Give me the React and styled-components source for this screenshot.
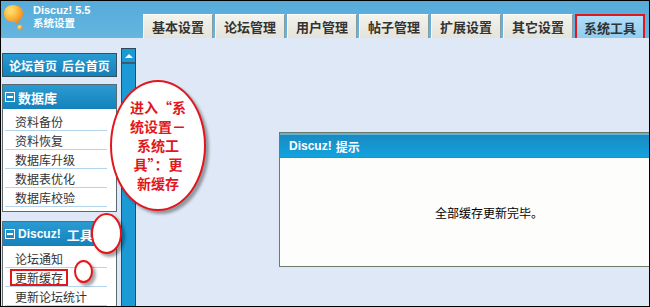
import styled, { createGlobalStyle } from 'styled-components'

const GlobalStyle = createGlobalStyle`
  html, body {
    margin: 0;
    padding: 0;
    overflow: hidden;
    background: #ffffff;
  }
  * {
    box-sizing: border-box;
  }
`

const cjk = `"Noto Sans CJK SC", "Liberation Sans", sans-serif`

const Frame = styled.div`
  position: relative;
  width: 650px;
  height: 307px;
  border: 1px solid #000;
  display: flex;
  flex-direction: column;
  overflow: hidden;
  font-family: ${cjk};
  background: #dfe8f6;
`

const Header = styled.div`
  height: 37px;
  flex-shrink: 0;
  display: flex;
  background: linear-gradient(#56abd9, #65b6e0);
`

const Brand = styled.div`
  width: 142px;
  display: flex;
  align-items: flex-start;
  padding: 2px 0 0 2px;
  gap: 8px;
`

const BrandText = styled.div`
  display: flex;
  flex-direction: column;
  color: #fff;
  font-weight: bold;
  line-height: 11px;
  padding-top: 2px;
  b {
    font-family: "Liberation Sans", sans-serif;
    font-size: 11px;
  }
  span {
    font-size: 10.5px;
    margin-top: 1px;
  }
`

const Tabs = styled.div`
  align-self: flex-end;
  display: flex;
  gap: 2px;
`

const Tab = styled.div`
  width: 70px;
  height: 24px;
  display: flex;
  align-items: center;
  justify-content: center;
  font-size: 13px;
  font-weight: bold;
  color: #333;
  background: ${({ $active }) =>
    $active ? 'linear-gradient(#b3defa, #8fcdef)' : 'linear-gradient(#f3f3ed, #e3e3db)'};
  border: ${({ $active }) => ($active ? '2px solid #e3161c' : '1px solid #ffffff')};
  border-right-color: ${({ $active }) => ($active ? '#e3161c' : '#8a9aa2')};
  border-bottom: none;
`

const Body = styled.div`
  flex: 1;
  display: flex;
  min-height: 0;
`

const Sidebar = styled.div`
  width: 115px;
  margin-left: 1px;
  padding-top: 15px;
  display: flex;
  flex-direction: column;
  flex-shrink: 0;
`

const NavBox = styled.div`
  height: 25px;
  border: 1px solid #34515e;
  background: linear-gradient(#2a9bd2, #1581ba);
  color: #fff;
  font-size: 12px;
  font-weight: bold;
  white-space: nowrap;
  display: flex;
  align-items: center;
  padding-left: 6px;
  word-spacing: 2px;
`

const Section = styled.div`
  margin-top: ${({ $gap }) => $gap}px;
  border: 1px solid #5b6b73;
  border-bottom-width: ${({ $open }) => ($open ? 0 : 1)}px;
  background: #fff;
  padding-bottom: ${({ $open }) => ($open ? 0 : 4)}px;
`

const SectionHead = styled.div`
  height: 24px;
  display: flex;
  align-items: center;
  gap: 3px;
  padding-left: 2px;
  background: linear-gradient(#2a9bd2, #1581ba);
  color: #fff;
  font-size: 13px;
  font-weight: bold;
  white-space: nowrap;
`

const Toggle = styled.span`
  width: 10px;
  height: 10px;
  border: 1px solid #fff;
  position: relative;
  &::after {
    content: '';
    position: absolute;
    left: 1px;
    right: 1px;
    top: 3px;
    height: 2px;
    background: #fff;
  }
`

const HeadLatin = styled.span`
  font-family: "Liberation Sans", sans-serif;
  font-size: 12px;
  margin-right: 3px;
`

const ItemList = styled.div`
  padding-top: 3px;
`

const Item = styled.div`
  height: 19px;
  margin: 0 9px 0 2px;
  padding-left: 10px;
  border-bottom: 1px solid #b4d4ec;
  display: flex;
  align-items: center;
  font-size: 12px;
  color: #333;
  white-space: nowrap;
`

const Mark = styled.span`
  display: inline-block;
  border: 2px solid #e3161c;
  padding: 0 3px;
  margin-left: -5px;
  line-height: 13px;
`

const ScrollTrack = styled.div`
  width: 15px;
  margin: 10px 0 0 4px;
  flex-shrink: 0;
  background: #1b9ad6;
  border: 1px solid #2d4a5a;
  border-bottom: none;
`

const ScrollUp = styled.div`
  height: 15px;
  border-bottom: 2px solid #3d5b6c;
  display: flex;
  align-items: center;
  justify-content: center;
  &::before {
    content: '';
    border-left: 4px solid transparent;
    border-right: 4px solid transparent;
    border-bottom: 4px solid #fff;
  }
`

const Main = styled.div`
  flex: 1;
  overflow: hidden;
  padding: 94px 0 0 143px;
`

const Dialog = styled.div`
  width: 420px;
  border: 1px solid #6d7b6b;
  background: #fdfdfb;
`

const DialogHead = styled.div`
  height: 25px;
  border-top: 2px solid #5fb2d8;
  border-bottom: 1px solid #6d7b6b;
  background: linear-gradient(#1a8ac2, #12a3df);
  color: #fff;
  font-size: 12px;
  font-weight: bold;
  display: flex;
  align-items: center;
  padding-left: 9px;
  gap: 4px;
  b {
    font-family: "Liberation Sans", sans-serif;
  }
`

const DialogBody = styled.div`
  height: 108px;
  display: flex;
  align-items: center;
  justify-content: center;
  font-size: 12px;
  color: #000;
`

const Callout = styled.div`
  position: absolute;
  left: ${({ $x }) => $x}px;
  top: ${({ $y }) => $y}px;
  width: ${({ $w }) => $w}px;
  height: ${({ $h }) => $h}px;
  border-radius: 50%;
  border: 2px solid #e3161c;
  background: #fff;
  box-shadow: 3px 3px 3px rgba(0, 0, 0, 0.35);
  display: flex;
  align-items: center;
  justify-content: center;
  text-align: center;
  color: #e3161c;
  font-size: 14px;
  font-weight: bold;
  line-height: 19px;
`

function Logo() {
  return (
    <svg width="22" height="28" viewBox="0 0 22 28">
      <defs>
        <radialGradient id="bub" cx="0.35" cy="0.3" r="0.8">
          <stop offset="0" stopColor="#ffe680" />
          <stop offset="0.5" stopColor="#fbb63a" />
          <stop offset="1" stopColor="#ee7f16" />
        </radialGradient>
      </defs>
      <path
        d="M10 2 C16 2 20 5.5 20 10.5 C20 14.5 17.5 17 15 18 C15.5 19.5 16.5 20.5 17.5 21 C14.5 21 12.5 20 11.5 19 C5.5 19.5 1 16 1 10.5 C1 5.5 4.5 2 10 2 Z"
        fill="url(#bub)"
      />
      <circle cx="17" cy="24.5" r="2.6" fill="url(#bub)" />
    </svg>
  )
}

const tabs = ['基本设置', '论坛管理', '用户管理', '帖子管理', '扩展设置', '其它设置', '系统工具']
const dbItems = ['资料备份', '资料恢复', '数据库升级', '数据表优化', '数据库校验']

export default function App() {
  return (
    <>
      <GlobalStyle />
      <Frame>
        <Header>
          <Brand>
            <Logo />
            <BrandText>
              <b>Discuz! 5.5</b>
              <span>系统设置</span>
            </BrandText>
          </Brand>
          <Tabs>
            {tabs.map((t) => (
              <Tab key={t} $active={t === '系统工具'}>
                {t}
              </Tab>
            ))}
          </Tabs>
        </Header>
        <Body>
          <Sidebar>
            <NavBox>论坛首页 后台首页</NavBox>
            <Section $gap={7}>
              <SectionHead>
                <Toggle />
                数据库
              </SectionHead>
              <ItemList>
                {dbItems.map((t) => (
                  <Item key={t}>{t}</Item>
                ))}
              </ItemList>
            </Section>
            <Section $gap={9} $open>
              <SectionHead>
                <Toggle />
                <HeadLatin>Discuz!</HeadLatin>工具
              </SectionHead>
              <ItemList>
                <Item>论坛通知</Item>
                <Item>
                  <Mark>更新缓存</Mark>
                </Item>
                <Item>更新论坛统计</Item>
              </ItemList>
            </Section>
          </Sidebar>
          <ScrollTrack>
            <ScrollUp />
          </ScrollTrack>
          <Main>
            <Dialog>
              <DialogHead>
                <b>Discuz!</b>提示
              </DialogHead>
              <DialogBody>全部缓存更新完毕。</DialogBody>
            </Dialog>
          </Main>
        </Body>
        <Callout $x={109} $y={79} $w={96} $h={131}>
          进入“系
          <br />
          统设置－
          <br />
          系统工
          <br />
          具”：更
          <br />
          新缓存
        </Callout>
        <Callout $x={90} $y={212} $w={31} $h={41} />
        <Callout $x={73} $y={259} $w={19} $h={23} />
      </Frame>
    </>
  )
}
